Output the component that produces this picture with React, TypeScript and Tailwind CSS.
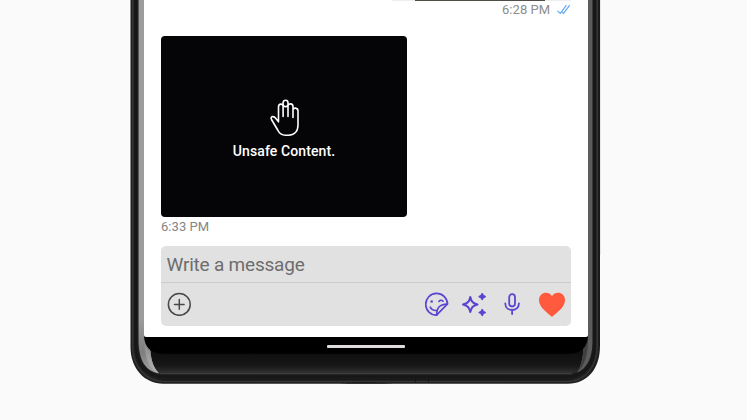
import React from "react";

function PhoneFrame() {
  return (
    <svg className="absolute inset-0" width="747" height="420" viewBox="0 0 747 420" fill="none" aria-hidden="true">
      <defs>
        <linearGradient id="chin" x1="0" y1="353" x2="0" y2="374" gradientUnits="userSpaceOnUse">
          <stop offset="0" stopColor="#0f0f0f" />
          <stop offset=".6" stopColor="#171717" />
          <stop offset="1" stopColor="#343434" />
        </linearGradient>
        <linearGradient id="glowL" x1="0" y1="320" x2="0" y2="374" gradientUnits="userSpaceOnUse">
          <stop offset="0" stopColor="#9c9c9c" />
          <stop offset=".6" stopColor="#7d7d7d" />
          <stop offset="1" stopColor="#a5a5a5" />
        </linearGradient>
        <linearGradient id="fadeL" x1="0" y1="345" x2="0" y2="374" gradientUnits="userSpaceOnUse">
          <stop offset="0" stopColor="#8d8d8d" />
          <stop offset="1" stopColor="#b5b5b5" />
        </linearGradient>
      </defs>
      <path d="M130.5 0V347C130.5 369 145 383.7 163 383.7H568C587 383.7 600 369 600 346V0Z" fill="#1f1f1f" />
      <path d="M132.7 0V346C132.7 367 146 381.5 164 381.5H567C586 381.5 597.2 366 597.2 346V0" stroke="#333" strokeWidth="1.6" />
      <path d="M135.8 0V345C135.8 365 148 376.8 164 376.8H567C584 376.8 594.5 364 594.5 345V0" stroke="#171717" strokeWidth="3" />
      <path d="M599.4 0V346" stroke="#191919" />
      <path d="M138.5 0V344C138.5 363 149 374 166 374H564C582 374 592.5 363 592.5 344V0Z" fill="url(#chin)" />
      <path d="M138.5 0V342C139 361 146 371 159 373.5C153 367 150.5 358 150 347L144 335V0Z" fill="url(#glowL)" />
      <path d="M144 336C144 344 147 350 150.5 351C151 361 154 369 159 373C150 370 144 359 144 336Z" fill="url(#fadeL)" />
      <path d="M588 0V337L583.5 347C583 358 581 367 577 372.5C586 369 592.5 359 592.5 342V0Z" fill="#5c5c5c" />
      <path d="M588 337L583.5 347C583 358 581 367 577 372.5C584 367 588.5 355 588 337Z" fill="#404040" />
      <path d="M160 373.7H572" stroke="#404040" />
      <path d="M158 379.5H574" stroke="#151515" strokeWidth=".7" />
      <path d="M340 383.5C350 382 382 382 393 383.5Z" fill="#101010" />
      <path d="M415.5 375V383M428.5 375V383" stroke="#151515" strokeWidth=".8" />
      <path d="M144 336H588C587.5 347 581 353.7 569 353.7H163C151 353.7 144.5 347 144 336Z" fill="#000" />
      <path d="M600.5 0V255" stroke="#dedede" strokeWidth=".7" />
    </svg>
  );
}

function DoubleCheck() {
  return (
    <svg width="14" height="12" viewBox="0 0 14 12" fill="none" stroke="#5aa8f5" strokeWidth="1.1">
      <path d="M.5 6.8 3.3 9.4 9.4 1.1M4.3 7.1 6.6 9.4 12.7 1.1" />
    </svg>
  );
}

function Hand() {
  return (
    <svg width="30" height="38" viewBox="0 0 30 38" fill="none" stroke="#fff" strokeWidth="1.6" strokeLinecap="round" strokeLinejoin="round">
      <path d="M8.5 22V8C8.5 4.2 13.1 4.2 13.1 7.5V17.5M13.1 8V3.8C13.1.4 18 .4 18 3.8V17.5M13.1 5.5C13.1 8.3 18 8.3 18 5.5M18 7.5C18 3.8 23 4.1 23 7.5V18.5M23 11C23 8.2 28 8.5 28 12V26C28 32.5 24.2 36.2 18.4 36.2H15.5C11.5 36.2 9.2 34.3 7.7 31L1.5 20.5C.1 17.8 3.2 16.7 5 18.6L8.5 22.8" />
    </svg>
  );
}

function Plus() {
  return (
    <svg width="24" height="24" viewBox="0 0 24 24" fill="none" stroke="#484848" strokeWidth="1.5" strokeLinecap="round">
      <circle cx="12.3" cy="12.4" r="10.9" />
      <path d="M12.3 7.6v9.6M7.5 12.4h9.6" />
    </svg>
  );
}

function Sticker() {
  return (
    <svg width="24" height="24" viewBox="0.4 -0.4 24 24" fill="none" stroke="#5b45d0" strokeWidth="1.7" strokeLinecap="round" strokeLinejoin="round">
      <path d="M12 22.8A10.9 10.9 0 1 1 22.9 11.5L12 22.8Z" />
      <path d="M12 22.8C12.2 15 14.5 12.4 22.7 11.8M5.7 14.8C6.7 16.8 9 18.3 11.8 18.1M14.4 8.9C15.7 7.5 17.3 7.5 18.4 8.8" />
      <circle cx="7.1" cy="9.1" r="1.3" fill="#5b45d0" stroke="none" />
    </svg>
  );
}

function Sparkles() {
  return (
    <svg width="26" height="25" viewBox="0 0 26 25" fill="none">
      <path d="M9.3 4.9C10.4 9.5 11.7 11.3 16.5 12.5C11.7 13.7 10.4 15.4 9.3 20.1C8.2 15.4 6.9 13.7 2 12.5C6.9 11.3 8.2 9.5 9.3 4.9Z" stroke="#5b45d0" strokeWidth="2" strokeLinejoin="round" />
      <path d="M21.2 1.8Q21.8 4 24.1 4.6Q21.8 5.2 21.2 7.4Q20.6 5.2 18.3 4.6Q20.6 4 21.2 1.8ZM21.2 17.7Q21.8 19.9 24.1 20.5Q21.8 21.1 21.2 23.3Q20.6 21.1 18.3 20.5Q20.6 19.9 21.2 17.7Z" fill="#5b45d0" stroke="#5b45d0" strokeWidth="1.7" strokeLinejoin="round" />
    </svg>
  );
}

function Mic() {
  return (
    <svg width="16" height="22" viewBox="0 0 16 22" fill="none" stroke="#5b45d0" strokeWidth="1.8" strokeLinecap="round">
      <rect x="5.2" y="1.2" width="5.8" height="12.3" rx="2.9" />
      <path d="M1.3 10.4C1.3 19.2 14.9 19.2 14.9 10.4M8.1 17V21" />
    </svg>
  );
}

function Heart() {
  return (
    <svg width="26" height="25" viewBox="0 0 26 25">
      <path d="M13 24.9C9.4 21.3 0 15.8 0 8.2C0 .4 9.2-1.6 13 4.2C16.8-1.6 26 .4 26 8.2C26 15.8 16.6 21.3 13 24.9Z" fill="#ff593e" />
    </svg>
  );
}

function Composer() {
  return (
    <section className="mx-[17px] mt-[10px] h-20 overflow-hidden rounded-[5px] bg-[#e1e1e1]">
      <div className="flex h-[37px] items-center border-b border-[#cbcbcb] pl-[5.5px] pt-[2px] text-[19px] tracking-[-0.21px] text-[#6d6d6d]">Write a message</div>
      <div className="flex h-[43px] items-center pb-px pl-[6px] pr-[6px]">
        <Plus />
        <div className="ml-auto flex items-center">
          <Sticker />
          <div className="ml-[12px]"><Sparkles /></div>
          <div className="ml-[17px]"><Mic /></div>
          <div className="ml-[19px]"><Heart /></div>
        </div>
      </div>
    </section>
  );
}

export default function App() {
  return (
    <main className="relative h-[420px] w-[747px] overflow-hidden bg-[#fafafa] font-[Roboto,sans-serif]">
      <PhoneFrame />
      <div className="relative ml-36 w-[444px]">
        <div className="h-[337px] overflow-hidden rounded-b-[2px] bg-white">
          <div className="flex h-9 flex-col">
            <div className="ml-[248px] flex h-px w-[179px] bg-[#eeeeee]">
              <div className="ml-[23px] w-[130px] bg-[#514e48]" />
            </div>
            <div className="flex h-[18px] items-center pl-[358px] text-[13px] leading-[18px] tracking-[0.05px] text-[#8d8d8d]">
              <span>6:28 PM</span>
              <span className="ml-[7px]"><DoubleCheck /></span>
            </div>
          </div>
          <article className="ml-[17px] flex h-[181px] w-[246px] flex-col items-center rounded-[4px] bg-[#050508] pt-[63px] text-white">
            <div className="pl-px"><Hand /></div>
            <p className="mt-[4px] text-[14px] font-medium leading-5 tracking-[0.1px]">Unsafe Content.</p>
          </article>
          <div className="ml-[17px] h-[19px] pt-px text-[13px] leading-[18px] tracking-[0.05px] text-[#858585]">6:33 PM</div>
          <Composer />
        </div>
        <div className="flex h-[17px] justify-center pt-2">
          <div className="h-[3px] w-[78px] rounded-[1px] bg-[#dedade]" />
        </div>
      </div>
    </main>
  );
}
